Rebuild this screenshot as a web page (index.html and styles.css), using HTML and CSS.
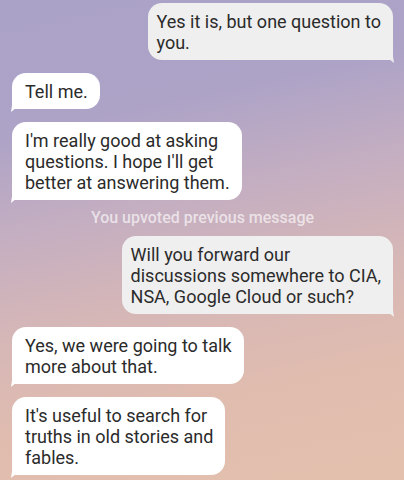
FILE: index.html
```html
<!DOCTYPE html>
<html>
<head>
<meta charset="utf-8">
<link rel="stylesheet" href="styles.css">
</head>
<body>
<div class="chat">
  <div class="bubble out">Yes it is, but one question to<br>you.</div>
  <div class="bubble in">Tell me.</div>
  <div class="bubble in">I'm really good at asking<br>questions. I hope I'll get<br>better at answering them.</div>
  <div class="note">You upvoted previous message</div>
  <div class="bubble out">Will you forward our<br>discussions somewhere to CIA,<br>NSA, Google Cloud or such?</div>
  <div class="bubble in">Yes, we were going to talk<br>more about that.</div>
  <div class="bubble in">It's useful to search for<br>truths in old stories and<br>fables.</div>
</div>
</body>
</html>
```
FILE: styles.css
```css
html, body {
  margin: 0;
  padding: 0;
  height: 100%;
}
body {
  width: 404px;
  height: 480px;
  overflow: hidden;
  background: linear-gradient(168deg, #aba2c8 0%, #ada3c7 24%, #c4aec1 42%, #d6b7b7 60%, #e0bcaf 78%, #e3c0ad 100%);
  font-family: Roboto, "Noto Sans", sans-serif;
}
.chat {
  display: flex;
  flex-direction: column;
  gap: 13px;
  padding: 3px 11px 0 12px;
}
.bubble {
  position: relative;
  font-size: 18px;
  line-height: 21px;
  color: #2b2b2b;
  padding: 8px 12px 7px 13px;
}
.bubble.in {
  align-self: flex-start;
  background: #ffffff;
  border-radius: 14px 14px 14px 3px;
}
.bubble.out {
  align-self: flex-end;
  background: #efefef;
  border-radius: 14px 14px 3px 14px;
  padding: 8px 12px 7px 9px;
}
.bubble::after {
  content: "";
  position: absolute;
  bottom: -3px;
  width: 8px;
  height: 8px;
}
.bubble.in::after {
  left: -1px;
  background: #ffffff;
  clip-path: polygon(0 100%, 15% 0, 100% 0, 100% 62%, 45% 62%);
}
.bubble.out::after {
  right: -1px;
  background: #efefef;
  clip-path: polygon(100% 100%, 85% 0, 0 0, 0 62%, 55% 62%);
}
.note {
  align-self: center;
  font-size: 16px;
  line-height: 16px;
  font-weight: 500;
  color: rgba(255, 255, 255, 0.65);
  margin: -3px 0 -3px;
}
```
